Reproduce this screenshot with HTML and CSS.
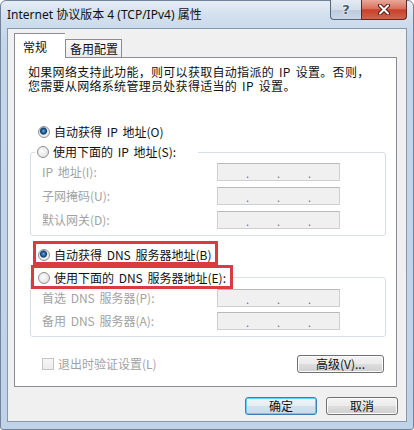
FILE: index.html
```html
<!DOCTYPE html>
<html lang="zh-CN">
<head>
  <meta charset="UTF-8" />
  <title>Internet 协议版本 4 (TCP/IPv4) 属性</title>
  <link rel="stylesheet" href="styles.css">
</head>
<body>

  <div class="window">
    <!-- title bar with help / close -->
    <div class="titlebar">
      <span class="title">Internet 协议版本 4 (TCP/IPv4) 属性</span>
      <div class="caption">
        <span class="cap-btn help">?</span>
        <span class="cap-btn close">
          <svg width="14" height="11" viewBox="0 0 14 11">
            <path d="M3 1.5 L11 9.5 M11 1.5 L3 9.5" stroke="#5a1c14" stroke-width="4" stroke-linecap="round" fill="none"/>
            <path d="M3 1.5 L11 9.5 M11 1.5 L3 9.5" stroke="#fff" stroke-width="2" stroke-linecap="round" fill="none"/>
          </svg>
        </span>
      </div>
    </div>

    <div class="client">
      <div class="tabs">
        <span class="tab active">常规</span>
        <span class="tab">备用配置</span>
      </div>

      <div class="panel">
        <div class="intro">
          <span class="line">如果网络支持此功能，则可以获取自动指派的 IP 设置。否则，</span>
          <span class="line">您需要从网络系统管理员处获得适当的 IP 设置。</span>
        </div>

        <label class="radio-row ip-auto"><span class="radio checked"></span>自动获得 IP 地址(O)</label>

        <fieldset class="group ip">
          <legend><span class="radio"></span>使用下面的 IP 地址(S):</legend>
          <div class="field"><span class="label">IP 地址(I):</span><span class="ipbox"><i>.</i><i>.</i><i>.</i></span></div>
          <div class="field"><span class="label">子网掩码(U):</span><span class="ipbox"><i>.</i><i>.</i><i>.</i></span></div>
          <div class="field"><span class="label">默认网关(D):</span><span class="ipbox"><i>.</i><i>.</i><i>.</i></span></div>
        </fieldset>

        <label class="radio-row mark dns-auto"><span class="radio checked"></span>自动获得 DNS 服务器地址(B)</label>

        <fieldset class="group dns">
          <legend class="mark"><span class="radio"></span>使用下面的 DNS 服务器地址(E):</legend>
          <div class="field"><span class="label">首选 DNS 服务器(P):</span><span class="ipbox"><i>.</i><i>.</i><i>.</i></span></div>
          <div class="field"><span class="label">备用 DNS 服务器(A):</span><span class="ipbox"><i>.</i><i>.</i><i>.</i></span></div>
        </fieldset>

        <div class="bottom-row">
          <label class="check-row"><span class="checkbox"></span>退出时验证设置(L)</label>
          <span class="btn advanced">高级(V)...</span>
        </div>
      </div>

      <div class="footer">
        <span class="btn default">确定</span>
        <span class="btn">取消</span>
      </div>
    </div>
  </div>

</body>
</html>
```

FILE: styles.css
```css
html, body {
  margin: 0;
  padding: 0;
  background: #fff;
}

body {
  width: 414px;
  height: 430px;
  overflow: hidden;
}

/* outer aero frame */
.window {
  box-sizing: border-box;
  width: 414px;
  height: 430px;
  padding: 0 6px 7px 6px;
  border: 1px solid #71839a;
  border-radius: 6px 6px 3px 3px;
  background: linear-gradient(#e6edf6 0, #d3e0ee 14px, #c4d6ea 40px, #bfd2e8 100%);
  display: flex;
  flex-direction: column;
}

.titlebar {
  height: 27px;
  display: flex;
  align-items: flex-start;
}

.title {
  margin-top: 6px;
  font: 12px/16px "Noto Sans", "Noto Sans CJK SC", sans-serif;
  color: #111;
}

.caption {
  margin-left: auto;
  display: flex;
  margin-top: -1px;
}

.cap-btn {
  box-sizing: border-box;
  height: 20px;
  display: flex;
  align-items: center;
  justify-content: center;
  border: 1px solid #56657a;
  border-top: none;
}

.help {
  width: 31px;
  border-right: none;
  border-radius: 0 0 0 4px;
  background: linear-gradient(#e4ebf3 0, #d2dde9 50%, #bccbdd 51%, #c9d7e6 100%);
  font: bold 13px/1 "DejaVu Sans", sans-serif;
  color: #4b5b70;
  text-shadow: 0 0 2px #fff, 0 0 2px #fff;
}

.close {
  width: 46px;
  border-color: #5b2a24;
  border-radius: 0 0 4px 0;
  background: linear-gradient(#e9a999 0, #d8705f 45%, #c7412c 52%, #d4624a 100%);
}

/* client area */
.client {
  flex: 1;
  display: flex;
  flex-direction: column;
  border: 1px solid #8598b0;
  background: #f0f0f0;
  font: 12px/14px "Noto Sans CJK SC", sans-serif;
  word-spacing: 2px;
  color: #111;
}

.tabs {
  margin: 4px 0 0 6px;
  height: 24px;
  display: flex;
  align-items: flex-end;
}

.tab {
  box-sizing: border-box;
  height: 18px;
  padding: 2px 3px 0 4px;
  border: 1px solid #898c95;
  border-bottom: none;
  background: linear-gradient(#fafafa, #ececec);
}

.tab.active {
  height: 25px;
  margin-bottom: -1px;
  padding: 6px 18px 0 8px;
  background: #fff;
  position: relative;
  z-index: 1;
  border-right: none;
}

.panel {
  margin: 0 9px 0 6px;
  padding: 0 0 13px 0;
  border: 1px solid #898c95;
  background: #fff;
}

.intro {
  margin: 7px 0 0 13px;
  letter-spacing: 0.3px;
}

.intro .line {
  display: block;
  height: 14px;
}

.radio {
  box-sizing: border-box;
  width: 12px;
  height: 12px;
  margin-right: 4px;
  border-radius: 50%;
  border: 1px solid #8f8f8f;
  background: radial-gradient(circle at 40% 40%, #fdfdfd 0, #e4e4e4 70%, #d3d3d3 100%);
  flex-shrink: 0;
}

.radio.checked {
  background: radial-gradient(circle at 45% 40%, #7fb6e2 0, #2f6ea6 1.5px, #123f6b 3px, #6f93b5 3.6px, #f2f2f2 4.2px, #dcdcdc 100%);
}

.radio-row {
  display: flex;
  align-items: center;
  width: fit-content;
}

.ip-auto {
  margin: 32px 0 0 23px;
}

.group {
  margin: 0 10px 0 15px;
  padding: 0;
  min-width: 0;
  border: 1px solid #d5dfe5;
  border-radius: 3px;
}

.group legend {
  display: flex;
  align-items: center;
  padding: 0 22px 0 2px;
  margin-left: 4px;
  background: #fff;
}

.group.ip {
  margin-top: 6px;
  padding-bottom: 6px;
}

.group.ip .field:first-of-type {
  margin-top: 4px;
}

.field {
  display: grid;
  grid-template-columns: 175px 123px;
  align-items: center;
  height: 18px;
  margin-top: 6px;
  padding-left: 11px;
}

.group.dns {
  padding-bottom: 6px;
}

.group.dns .field {
  margin-top: 5px;
}

.group.dns .field:first-of-type {
  margin-top: 0;
}

.label {
  color: #a2a2a2;
}

.ipbox {
  box-sizing: border-box;
  height: 18px;
  display: flex;
  justify-content: space-evenly;
  align-items: flex-end;
  border: 1px solid #cfcfcf;
  border-top-color: #b9b9b9;
  background: #f0f0f0;
}

.ipbox i {
  font-style: normal;
  font-size: 11px;
  line-height: 13px;
  color: #707070;
}

/* red annotation frames */
.mark {
  border: 3px solid #d83c40;
}

.dns-auto {
  margin: 5px 0 0 18px;
  padding: 4px 4px 0 2px;
}

.group.dns legend.mark {
  margin-left: 0;
  padding: 3px 4px 1px 4px;
}

.bottom-row {
  margin: 18px 12px 0 27px;
  height: 18px;
  display: flex;
  align-items: center;
  justify-content: space-between;
}

.check-row {
  display: flex;
  align-items: center;
  color: #a2a2a2;
}

.checkbox {
  box-sizing: border-box;
  width: 12px;
  height: 12px;
  margin-right: 4px;
  border: 1px solid #c4c4c4;
  background: linear-gradient(#f6f6f6, #ececec);
}

/* push buttons */
.btn {
  box-sizing: border-box;
  height: 18px;
  display: flex;
  align-items: center;
  justify-content: center;
  border: 1px solid #707070;
  border-radius: 3px;
  background: linear-gradient(#f3f3f3 0, #ebebeb 50%, #dddddd 51%, #cfcfcf 100%);
  box-shadow: inset 0 0 0 1px #fcfcfc;
}

.advanced {
  width: 87px;
}

.footer {
  margin-top: 10px;
  padding: 0 8px 6px 0;
  display: flex;
  justify-content: flex-end;
  gap: 9px;
}

.footer .btn {
  width: 72px;
}

.btn.default {
  border-color: #3c7fb1;
  box-shadow: inset 0 0 0 1px #5fd0f4;
  background: linear-gradient(#f1f6fa 0, #e4edf4 50%, #d3e1ec 51%, #c9dbe9 100%);
}
```
